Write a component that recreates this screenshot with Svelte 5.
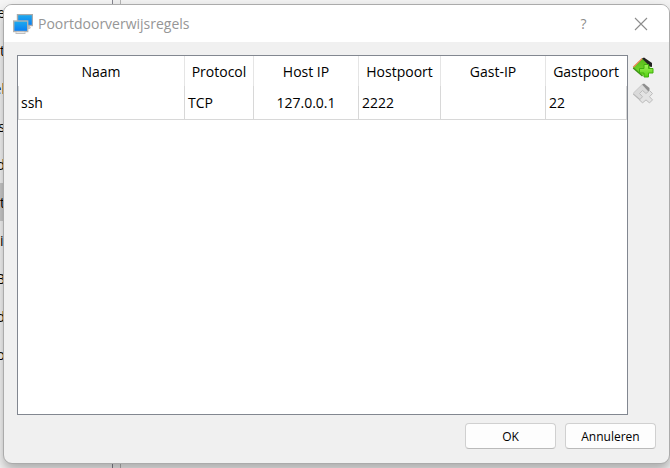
<script>
  const categories = ['e', 't', 'el', 's', 'd', 'tw', 'ie', 'B', 'd', 'o'];
  const current = 5;
  const columns = [
    { label: 'Naam', share: 167 },
    { label: 'Protocol', share: 69 },
    { label: 'Host IP', share: 105 },
    { label: 'Hostpoort', share: 82 },
    { label: 'Gast-IP', share: 105 },
    { label: 'Gastpoort', share: 81 }
  ];
  const total = columns.reduce((sum, c) => sum + c.share, 0);
  const rules = [['ssh', 'TCP', '127.0.0.1', '2222', '', '22']];
</script>

<div class="screen">
  <div class="behind">
    <ul>
      {#each categories as name, i}
        <li class:current={i === current} class:start={name === 'ie'}><span>{name}</span></li>
      {/each}
    </ul>
    <div class="splitter"></div>
  </div>

  <div class="dialog" role="dialog" aria-labelledby="title">
    <header>
      <svg class="logo" width="20" height="20" viewBox="0 0 20 20" aria-hidden="true">
        <defs>
          <linearGradient id="screenBlue" x1="0" y1="0" x2="0" y2="1">
            <stop offset="0" stop-color="#20acec" />
            <stop offset="1" stop-color="#087cf5" />
          </linearGradient>
        </defs>
        <path d="M12 12h5v3h-3z" fill="#c8c8c8" />
        <rect x="4.5" y=".5" width="15" height="11" fill="url(#screenBlue)" stroke="#a9aaab" stroke-width="1.4" />
        <path d="M15 13h3l-1 2h-2z" fill="#c4c4c4" />
        <rect x=".7" y="7" width="14" height="10.5" fill="url(#screenBlue)" stroke="#b4b3b1" stroke-width="1.4" />
        <path d="M2.5 19.2h10" stroke="#aaa" stroke-width="1.2" />
        <path d="M3.5 18.3h8" stroke="#eee" />
      </svg>
      <h1 id="title">Poortdoorverwijsregels</h1>
      <button class="caption" aria-label="Help">?</button>
      <button class="caption" aria-label="Sluiten">
        <svg width="14" height="14" viewBox="0 0 14 14"><path d="M1 1l12 12M13 1L1 13" stroke="#8c8c8c" stroke-width="1.1" /></svg>
      </button>
    </header>

    <main>
      <div class="frame">
        <table>
          <colgroup>
            {#each columns as c}
              <col style="width: {(c.share / total) * 100}%" />
            {/each}
          </colgroup>
          <thead>
            <tr>
              {#each columns as c}<th scope="col">{c.label}</th>{/each}
            </tr>
          </thead>
          <tbody>
            {#each rules as rule}
              <tr>
                {#each rule as value, i}<td class:centered={i === 2}>{value}</td>{/each}
              </tr>
            {/each}
          </tbody>
        </table>
      </div>
      <div class="tools">
        <button aria-label="Regel toevoegen">
          <svg width="22" height="22" viewBox="0 0 22 22">
            <defs>
              <linearGradient id="leaf" x1="0" y1="0" x2="0" y2="1">
                <stop offset="0" stop-color="#58b81c" />
                <stop offset="1" stop-color="#7ae02e" />
              </linearGradient>
              <linearGradient id="plus" x1="0" y1="0" x2="0" y2="1">
                <stop offset="0" stop-color="#a4f35c" />
                <stop offset="1" stop-color="#52d010" />
              </linearGradient>
            </defs>
            <path d="M1.2 10.5L10.5 1.5 19 9.5 11 19z" fill="url(#leaf)" />
            <path d="M1.2 10.3L10.3 1.4" stroke="#e8834f" stroke-width="1.2" />
            <path d="M1.2 10.9L10.5 19" stroke="#3c9413" stroke-width="1.4" />
            <path d="M10 1.5l2-1 8 5.5v4l-2-.5z" fill="#222" />
            <path d="M12 7.5h4.500v4h4.500v4.500h-4.500v4h-4.500v-4h-4.500v-4.500h4.500z" fill="url(#plus)" stroke="#41b00f" stroke-linejoin="round" />
          </svg>
        </button>
        <button aria-label="Regel verwijderen" disabled>
          <svg width="22" height="22" viewBox="0 0 22 22">
            <path d="M1.200 10.500L10.500 1.500 19 9.500 11 19z" fill="#dadada" />
            <path d="M1.200 10.300L10.300 1.400" stroke="#c6c6c6" />
            <path d="M1.200 10.900L10.500 19" stroke="#b4b4b4" stroke-width="1.200" />
            <path d="M10 1.500l2-1 5.500 4.500v4l-2-1.500z" fill="#8e8e8e" />
            <path d="M10.500 7.500l3.500 3 3.500-3 3 3-3 3.200 3 3.200-3 3-3.500-3-3.500 3-3-3 3-3.200-3-3.200z" fill="#e3e3e3" stroke="#bcbcbc" stroke-linejoin="round" />
          </svg>
        </button>
      </div>
    </main>

    <footer>
      <button>OK</button>
      <button>Annuleren</button>
    </footer>
  </div>
</div>

<style>
  :global(body) {
    margin: 0;
  }
  .screen {
    position: relative;
    display: flex;
    box-sizing: border-box;
    min-height: 100vh;
    padding: 4px 0 4px 3px;
    overflow: hidden;
    background: #f3f3f3;
    font-family: 'Open Sans', 'Noto Sans', sans-serif;
    font-size: 14px;
    color: #000;
  }
  .behind {
    position: absolute;
    inset: 0 auto 0 0;
    display: flex;
  }
  .behind ul {
    width: 112px;
    margin: 0;
    padding: 0;
    list-style: none;
    background: #f5f5f5;
    border-right: 1px solid #85858f;
  }
  .behind li {
    display: flex;
    justify-content: flex-end;
    width: 5px;
    height: 38px;
    line-height: 40px;
  }
  .behind li:first-child {
    height: 31px;
    line-height: 26px;
  }
  .behind li.start,
  .behind li.current {
    justify-content: flex-start;
  }
  .behind li.current {
    width: 100%;
    background: #cbcbcb;
  }
  .splitter {
    width: 7px;
    background: #f0f0f0;
    border-right: 1px solid #b5b5b5;
  }
  .dialog {
    position: relative;
    flex: 1;
    display: flex;
    flex-direction: column;
    background: #f0f0f0;
    border: 1px solid #ababab;
    border-radius: 9px;
    overflow: hidden;
    box-shadow: 0 6px 12px rgba(0, 0, 0, 0.3);
  }
  header {
    display: flex;
    align-items: center;
    height: 37px;
    padding-left: 9px;
    background: #fff;
  }
  h1 {
    flex: 1;
    margin: 0;
    padding-left: 5px;
    font-size: 14px;
    font-weight: 400;
    color: #969696;
  }
  button {
    font: inherit;
    color: inherit;
    padding: 0;
  }
  .caption {
    display: flex;
    align-items: center;
    justify-content: center;
    width: 57px;
    height: 37px;
    border: 0;
    background: none;
    color: #8c8c8c;
  }
  main {
    flex: 1;
    display: flex;
    gap: 4px;
    padding: 13px 15px 0 13px;
  }
  .frame {
    flex: 1;
    background: #fff;
    border: 1px solid #828790;
  }
  table {
    width: 100%;
    table-layout: fixed;
    border-collapse: separate;
    border-spacing: 0;
  }
  th,
  td {
    box-sizing: border-box;
    padding: 0 3px;
    border-right: 1px solid #d8d8d8;
    white-space: nowrap;
    font-weight: 400;
    text-align: left;
  }
  th {
    height: 30px;
    padding: 0;
    border-color: #e5e5e5;
    text-align: center;
  }
  th:last-child {
    border-color: #fff;
  }
  td {
    height: 34px;
    border-bottom: 1px solid #d8d8d8;
  }
  td:first-child {
    padding-left: 2px;
    border-left: 1px solid #d8d8d8;
  }
  .centered {
    text-align: center;
  }
  .tools {
    display: flex;
    flex-direction: column;
    gap: 4px;
    padding-top: 2px;
  }
  .tools button {
    width: 22px;
    height: 22px;
    border: 0;
    background: none;
  }
  .tools svg {
    display: block;
  }
  footer {
    display: flex;
    justify-content: flex-end;
    gap: 9px;
    padding: 8px 13px 14px;
  }
  footer button {
    box-sizing: border-box;
    width: 91px;
    height: 26px;
    background: #fdfdfd;
    border: 1px solid #d0d0d0;
    border-bottom-color: #bababa;
    border-radius: 4px;
    font-size: 12px;
  }
</style>
